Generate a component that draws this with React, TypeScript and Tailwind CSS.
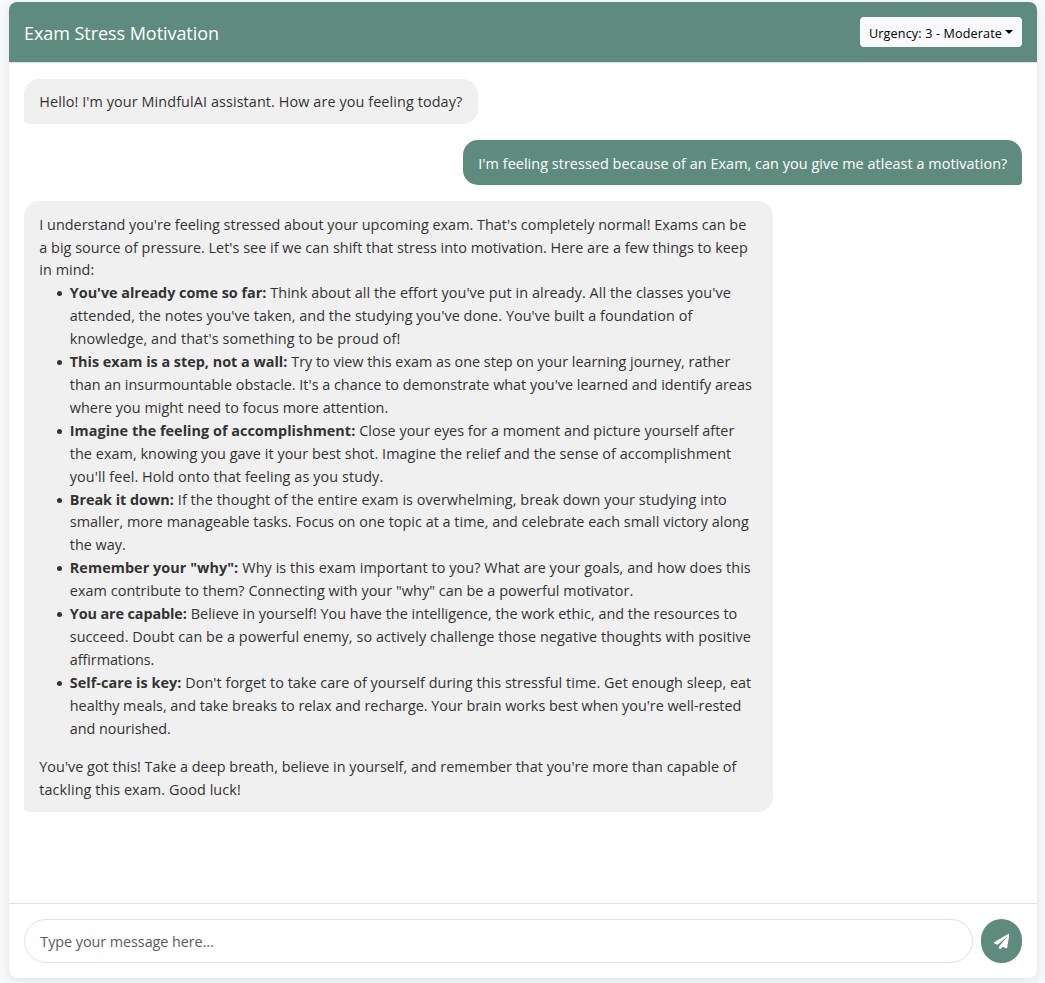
import { useLayoutEffect, useRef } from "react";

type FitProps = { text: string; width: number; className?: string };

/** A single run of text whose tracking is tuned so that it spans `width` pixels. */
function Fit({ text, width, className = "" }: FitProps) {
  const ref = useRef<HTMLSpanElement>(null);
  useLayoutEffect(() => {
    const el = ref.current;
    if (!el) return;
    el.style.letterSpacing = "0px";
    const natural = el.getBoundingClientRect().width;
    el.style.letterSpacing = `${(width - natural) / text.length}px`;
  }, [text, width]);
  return (
    <span ref={ref} className={`inline-block whitespace-pre ${className}`}>
      {text}
    </span>
  );
}

type Line = [text: string, width: number];

const intro: Line[] = [
  ["I understand you're feeling stressed about your upcoming exam. That's completely normal! Exams can be", 707],
  ["a big source of pressure. Let's see if we can shift that stress into motivation. Here are a few things to keep", 708.5],
  ["in mind:", 55],
];

const outro: Line[] = [
  ["You've got this! Take a deep breath, believe in yourself, and remember that you're more than capable of", 697],
  ["tackling this exam. Good luck!", 201.5],
];

const tips: { title: Line; lines: Line[] }[] = [
  {
    title: ["You've already come so far:", 196.5],
    lines: [
      ["Think about all the effort you've put in already. All the classes you've", 460.5],
      ["attended, the notes you've taken, and the studying you've done. You've built a foundation of", 622.5],
      ["knowledge, and that's something to be proud of!", 330.5],
    ],
  },
  {
    title: ["This exam is a step, not a wall:", 217.5],
    lines: [
      ["Try to view this exam as one step on your learning journey, rather", 439],
      ["than an insurmountable obstacle. It's a chance to demonstrate what you've learned and identify areas", 682],
      ["where you might need to focus more attention.", 318.5],
    ],
  },
  {
    title: ["Imagine the feeling of accomplishment:", 285.5],
    lines: [
      ["Close your eyes for a moment and picture yourself after", 375],
      ["the exam, knowing you gave it your best shot. Imagine the relief and the sense of accomplishment", 661.5],
      ["you'll feel. Hold onto that feeling as you study.", 313.5],
    ],
  },
  {
    title: ["Break it down:", 104],
    lines: [
      ["If the thought of the entire exam is overwhelming, break down your studying into", 549],
      ["smaller, more manageable tasks. Focus on one topic at a time, and celebrate each small victory along", 679],
      ["the way.", 56],
    ],
  },
  {
    title: ['Remember your "why":', 168.5],
    lines: [
      ["Why is this exam important to you? What are your goals, and how does this", 508.5],
      ['exam contribute to them? Connecting with your "why" can be a powerful motivator.', 563.5],
    ],
  },
  {
    title: ["You are capable:", 117],
    lines: [
      ["Believe in yourself! You have the intelligence, the work ethic, and the resources to", 546.5],
      ["succeed. Doubt can be a powerful enemy, so actively challenge those negative thoughts with positive", 681],
      ["affirmations.", 84.5],
    ],
  },
  {
    title: ["Self-care is key:", 111.5],
    lines: [
      ["Don't forget to take care of yourself during this stressful time. Get enough sleep, eat", 566],
      ["healthy meals, and take breaks to relax and recharge. Your brain works best when you're well-rested", 671.5],
      ["and nourished.", 101],
    ],
  },
];

function Paragraph({ lines }: { lines: Line[] }) {
  return (
    <p>
      {lines.map(([text, width]) => (
        <span key={text} className="flex h-[22.91px]">
          <Fit text={text} width={width} />
        </span>
      ))}
    </p>
  );
}

export default function App() {
  return (
    <div className="h-[983px] overflow-hidden bg-[#f8f9fa] pt-[2px] pr-2 pl-[9px] font-['Open_Sans','Noto_Sans',sans-serif] text-[14.4px] leading-[22.9px] text-[#333]">
      <main className="flex h-[976px] flex-col overflow-hidden rounded-[8px] bg-white shadow-[0_2px_10px_rgba(0,0,0,0.1)]">
        <header className="flex h-[61px] shrink-0 items-center justify-between border-b border-[#dee2e6] bg-[#5f8b7e] px-[15px] text-white">
          <h1 className="pt-[2px] text-[18px] leading-[24px]">
            <Fit text="Exam Stress Motivation" width={195} />
          </h1>
          <button className="flex h-[30px] w-[162px] items-center rounded-[4px] bg-[#f8f9fa] pl-[9px] text-[12.6px] text-black">
            <Fit text="Urgency: 3 - Moderate" width={133} className="pt-[5px]" />
            <span className="ml-[3px] border-x-4 border-t-4 border-x-transparent border-t-black" />
          </button>
        </header>

        <section className="flex grow flex-col items-start px-[15px] pt-[16px]">
          <div className="mb-[16px] h-[45px] w-[454px] shrink-0 rounded-[15px] rounded-bl-[4px] bg-[#f0f0f0] px-[15.3px] pt-[12px]">
            <Fit text="Hello! I'm your MindfulAI assistant. How are you feeling today?" width={423} />
          </div>
          <div className="mb-[16px] h-[45px] w-[559px] shrink-0 self-end rounded-[15px] rounded-br-[4px] bg-[#5f8b7e] px-[15.3px] pt-[13px] text-white">
            <Fit text="I'm feeling stressed because of an Exam, can you give me atleast a motivation?" width={529} />
          </div>
          <div className="h-[611px] w-[749px] shrink-0 rounded-[15px] rounded-bl-[4px] bg-[#f0f0f0] px-[15.3px] pt-[12.66px]">
            <Paragraph lines={intro} />
            <ul className="mb-[15.5px]">
              {tips.map(({ title, lines }) => (
                <li key={title[0]} className="flex">
                  <span className="mt-[9px] mr-[8px] ml-[17.5px] size-[5px] shrink-0 rounded-full bg-[#333]" />
                  <div>
                    {lines.map(([text, width], i) => (
                      <div key={text} className="flex h-[22.91px]">
                        {i === 0 && (
                          <strong className="mr-[4px] font-bold">
                            <Fit text={title[0]} width={title[1]} />
                          </strong>
                        )}
                        <Fit text={text} width={width} />
                      </div>
                    ))}
                  </div>
                </li>
              ))}
            </ul>
            <Paragraph lines={outro} />
          </div>
        </section>

        <footer className="flex h-[75px] shrink-0 gap-2 border-t border-[#dee2e6] px-[15px] pt-[15px]">
          <div className="flex h-[44px] grow items-center rounded-[24px] border border-[#dee2e6] px-[15.3px] text-[#595c5f]">
            <Fit text="Type your message here..." width={173.5} className="pt-[2px]" />
          </div>
          <button
            aria-label="Send"
            className="flex h-[44px] w-[41px] items-center justify-center rounded-full bg-[#5f8b7e] text-white"
          >
            <svg viewBox="0 0 512 512" className="mt-px size-[15.3px]" fill="currentColor">
              <path d="M476 3.2L12.5 270.6c-18.1 10.4-15.8 35.6 2.2 43.2L121 358.4l287.3-253.2c5.500-4.900 13.300 2.600 8.600 8.300L176 407v80.500c0 23.600 28.500 32.900 42.500 15.800L282 426l124.600 52.200c14.200 6 30.400-2.900 33-18.200l72-432C515 7.800 493.300-6.800 476 3.200z" />
            </svg>
          </button>
        </footer>
      </main>
    </div>
  );
}
